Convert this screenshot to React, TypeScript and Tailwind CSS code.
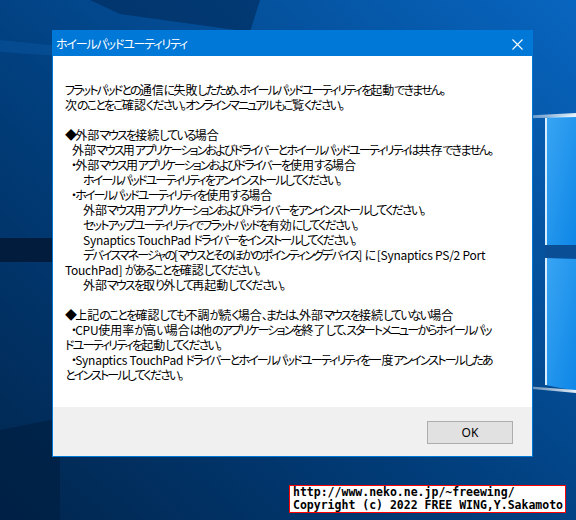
import React from "react";

type Line = { text: string; pad?: number };

// body of the message box, one entry per rendered row (empty text = blank row)
const message: Line[] = [
  { text: "フラットパッドとの通信に失敗したため、ホイールパッドユーティリティを起動できません。" },
  { text: "次のことをご確認ください。オンラインマニュアルもご覧ください。" },
  { text: "" },
  { text: "◆外部マウスを接続している場合" },
  { text: "外部マウス用アプリケーションおよびドライバーとホイールパッドユーティリティは共存できません。", pad: 7 },
  { text: "・外部マウス用アプリケーションおよびドライバーを使用する場合", pad: 6 },
  { text: "ホイールパッドユーティリティをアンインストールしてください。", pad: 18 },
  { text: "・ホイールパッドユーティリティを使用する場合", pad: 6 },
  { text: "外部マウス用アプリケーションおよびドライバーをアンインストールしてください。", pad: 18 },
  { text: "セットアップユーティリティでフラットパッドを有効にしてください。", pad: 18 },
  { text: "Synaptics TouchPad ドライバーをインストールしてください。", pad: 18 },
  { text: "デバイスマネージャの[マウスとそのほかのポインティングデバイス] に [Synaptics PS/2 Port", pad: 18 },
  { text: "TouchPad] があることを確認してください。" },
  { text: "外部マウスを取り外して再起動してください。", pad: 18 },
  { text: "" },
  { text: "◆上記のことを確認しても不調が続く場合、または、外部マウスを接続していない場合" },
  { text: "・CPU使用率が高い場合は他のアプリケーションを終了して、スタートメニューからホイールパッ", pad: 6 },
  { text: "ドユーティリティを起動してください。" },
  { text: "・Synaptics TouchPad ドライバーとホイールパッドユーティリティを一度アンインストールしたあ", pad: 6 },
  { text: "とインストールしてください。" },
];

const LATIN = /^[\x20-\x7e]+$/;
const KANJI = /^[\u4e00-\u9fff]+$/;

// kana are set tight like a UI gothic; kanji and latin runs keep closer to natural width
function Row({ text }: { text: string }) {
  const parts = text.split(/([\x20-\x7e]+|[\u4e00-\u9fff]+)/).filter(Boolean);
  return (
    <>
      {parts.map((p, i) => {
        if (LATIN.test(p)) return <span key={i} className="tracking-[-0.25px]">{p}</span>;
        if (KANJI.test(p)) return <span key={i} className="tracking-normal">{p}</span>;
        return <span key={i}>{p}</span>;
      })}
    </>
  );
}

function Wallpaper() {
  return (
    <svg className="absolute inset-0" width="576" height="520" viewBox="0 0 576 520">
      <defs>
        <linearGradient id="bg" x1="0" y1="1" x2="1" y2="0">
          <stop offset="0" stopColor="#01254d" />
          <stop offset="0.45" stopColor="#013f7e" />
          <stop offset="1" stopColor="#0865bf" />
        </linearGradient>
        <linearGradient id="pane" x1="0" y1="0" x2="1" y2="1">
          <stop offset="0" stopColor="#3aa6f4" />
          <stop offset="1" stopColor="#0d86e6" />
        </linearGradient>
        <linearGradient id="beam" x1="1" y1="0" x2="0" y2="0">
          <stop offset="0" stopColor="#ffffff" stopOpacity="0.9" />
          <stop offset="1" stopColor="#ffffff" stopOpacity="0" />
        </linearGradient>
      </defs>
      <rect width="576" height="520" fill="url(#bg)" />
      <polygon points="90,0 260,0 250,32 120,14" fill="#012a58" opacity="0.6" />
      <polygon points="0,40 60,46 60,56 0,52" fill="#0a56a0" opacity="0.5" />
      <rect x="0" y="238" width="60" height="24" fill="#011c3c" />
      <polygon points="0,430 60,418 60,520 0,520" fill="#001f42" opacity="0.7" />
      {/* windows logo panes */}
      <polygon points="545,118 576,115 576,247 545,245" fill="url(#pane)" />
      <polygon points="545,258 576,259 576,391 545,385" fill="url(#pane)" />
      <rect x="545" y="118" width="2" height="127" fill="#d8eeff" />
      <rect x="545" y="258" width="2" height="127" fill="#d8eeff" />
      <polygon points="500,117 576,113 576,117 500,119" fill="url(#beam)" />
      <polygon points="500,384 576,390 576,393 500,386" fill="url(#beam)" />
      <rect x="545" y="245" width="31" height="13" fill="#0a4f96" />
    </svg>
  );
}

export default function App() {
  return (
    <div className="relative h-[520px] w-[576px] overflow-hidden">
      <Wallpaper />

      {/* dialog window */}
      <div className="absolute left-[52px] top-[30px] flex h-[427px] w-[481px] flex-col border border-[#0078d7] bg-white">
        <div className="flex h-[25px] shrink-0 items-center justify-between bg-[#0078d7] pl-[3px] pr-[9px] text-white">
          <span className="text-[12px] leading-none tracking-[-1.2px] [font-family:'Noto_Sans_CJK_JP',sans-serif] [font-feature-settings:'palt']">
            ホイールパッドユーティリティ
          </span>
          <svg width="11" height="11" viewBox="0 0 11 11" className="mt-[1px]">
            <path d="M0.5 0.5 L10.5 10.5 M10.5 0.5 L0.5 10.5" stroke="#fff" strokeWidth="1.1" />
          </svg>
        </div>

        <div className="flex-1 pl-[12px] pt-[26px] text-[12px] leading-[15px] tracking-[-1.85px] text-black [font-family:'Noto_Sans_CJK_JP',sans-serif] [font-feature-settings:'palt']">
          {message.map((l, i) => (
            <div key={i} className="h-[15px] whitespace-pre" style={{ paddingLeft: l.pad ?? 0 }}>
              <Row text={l.text} />
            </div>
          ))}
        </div>

        <div className="flex h-[49px] shrink-0 items-start justify-end bg-[#f0f0f0] pr-[19px] pt-[14px]">
          <button className="h-[23px] w-[86px] border border-[#adadad] bg-[#e1e1e1] text-[12px] text-black [font-family:'Noto_Sans',sans-serif]">
            OK
          </button>
        </div>
      </div>

      {/* site stamp */}
      <div className="absolute left-[289px] top-[485px] whitespace-nowrap border border-[#ff0000] bg-white pl-[3px] pr-[2px] text-[11.5px] font-bold leading-[13px] text-black [font-family:'DejaVu_Sans_Mono',monospace]">
        <div>http://www.neko.ne.jp/~freewing/</div>
        <div>Copyright (c) 2022 FREE WING,Y.Sakamoto</div>
      </div>
    </div>
  );
}
